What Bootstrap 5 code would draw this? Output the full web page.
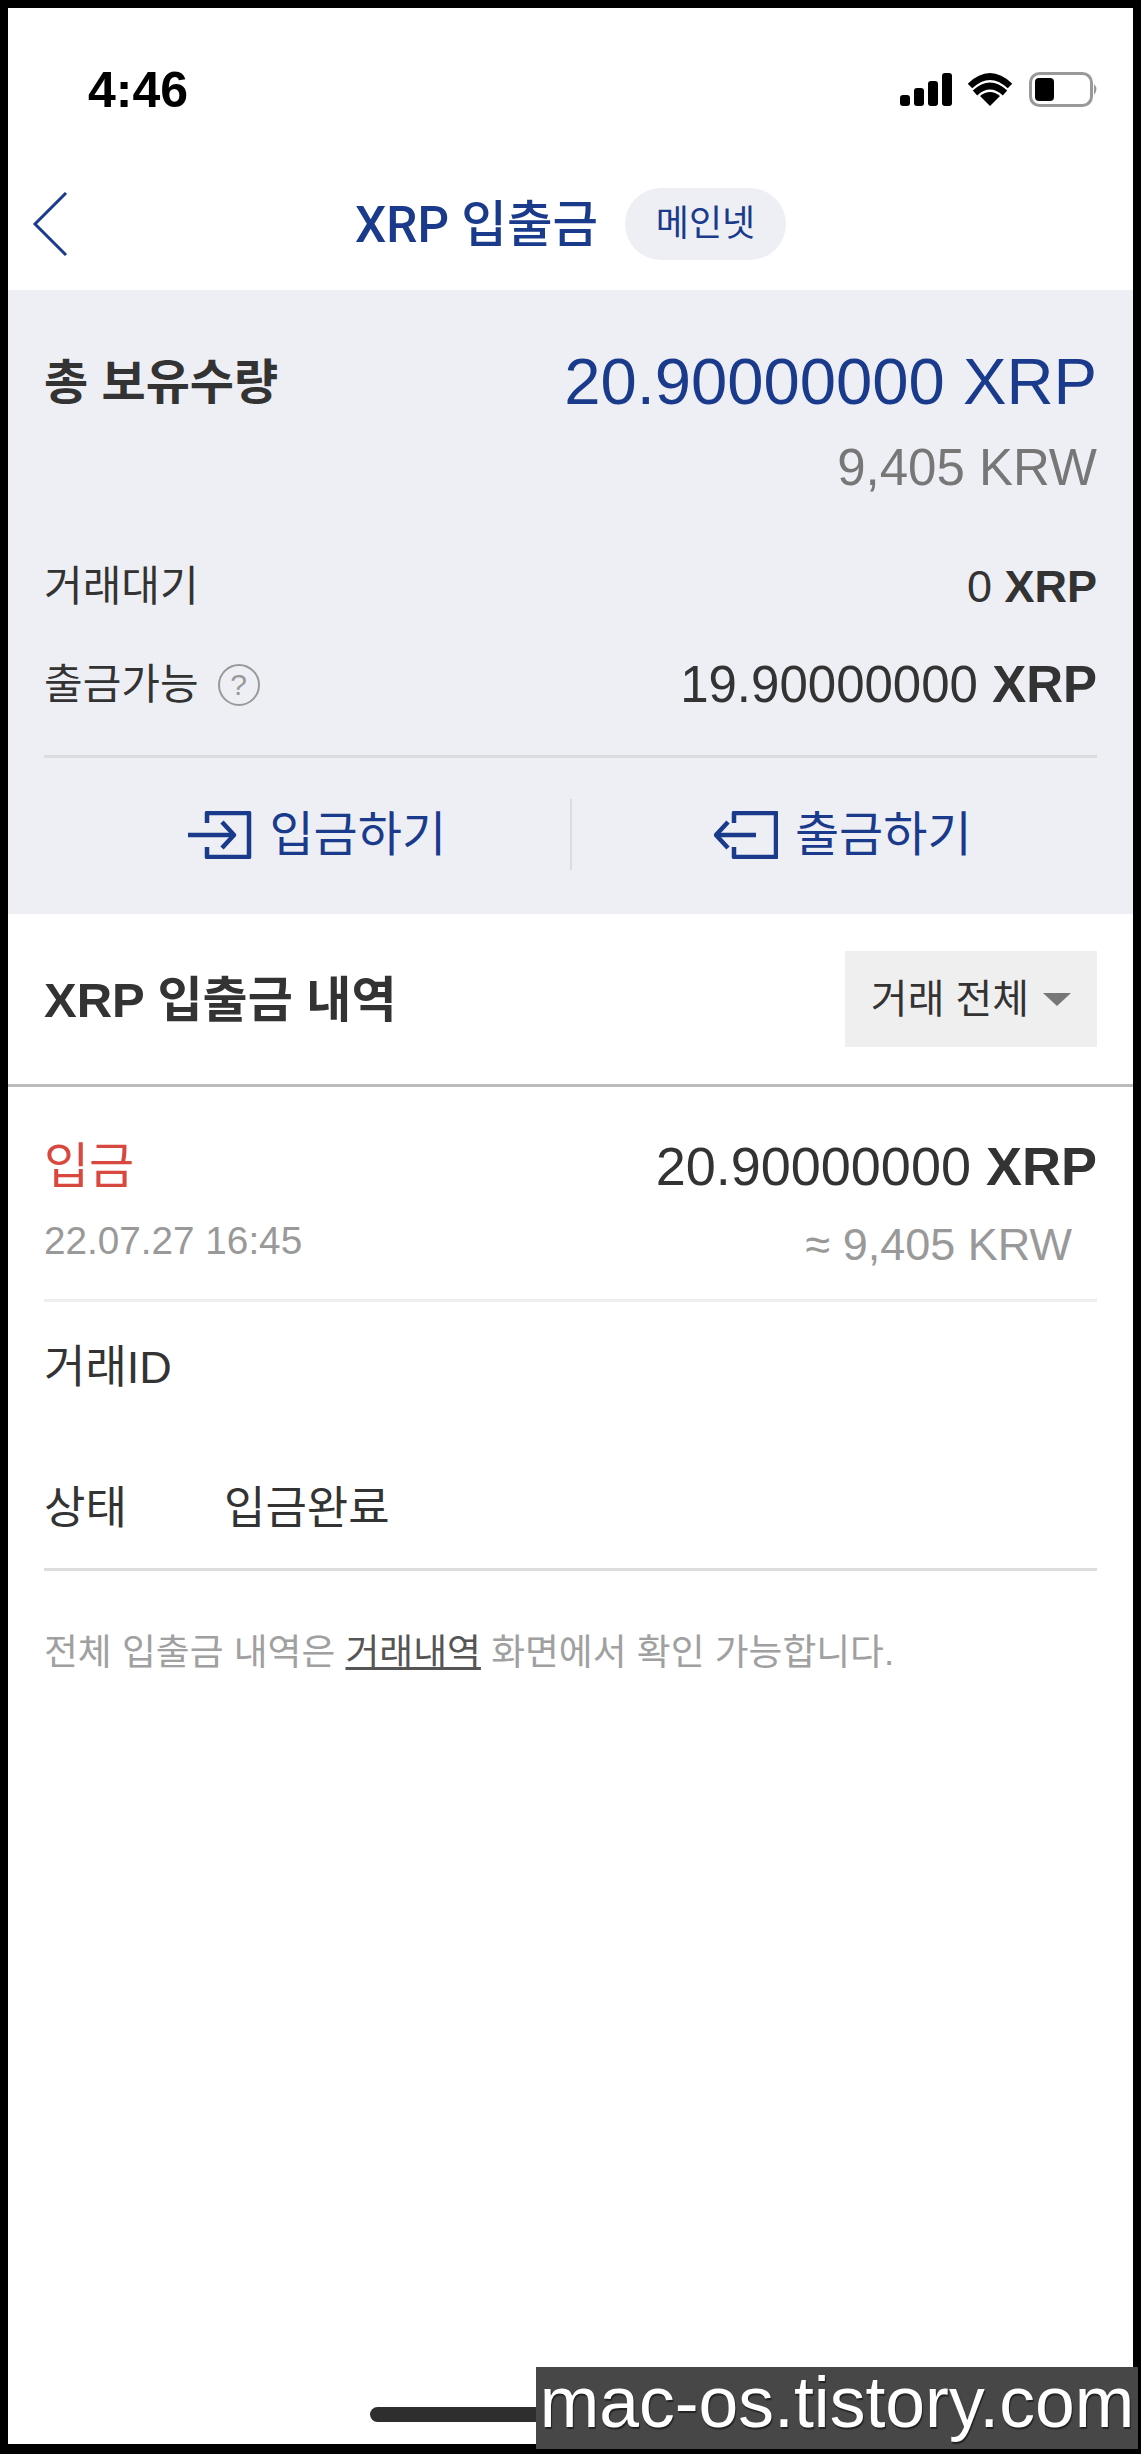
<!DOCTYPE html>
<html lang="ko">
  <head>
    <meta charset="UTF-8" />
    <meta name="viewport" content="width=device-width, initial-scale=1.0" />
    <title>XRP 입출금</title>
    <link rel="stylesheet" href="https://cdn.jsdelivr.net/npm/bootstrap@5.3.0/dist/css/bootstrap.min.css" />
    <style>
      body { background: #000; width: 1141px; height: 2454px; overflow: hidden; font-family: "Liberation Sans", "Noto Sans CJK KR", sans-serif; color: #333; }
      .phone { margin: 8px; width: 1125px; height: 2436px; background: #fff; }
      .status-bar { height: 130px; padding: 64px 33px 0 80px; }
      .status-time { font-size: 50px; line-height: 36px; font-weight: 700; color: #000; font-family: "Liberation Sans", sans-serif; }
      .top-bar { padding: 50px 0 30px; }
      .top-side { flex: 1 1 0; padding-left: 24px; }
      .top-title { font-family: Roboto, "Noto Sans CJK KR", sans-serif; font-size: 49.5px; line-height: 70px; padding-top: 2px; font-weight: 500; color: #1a3a8c; }
      .net-pill { height: 72px; width: 161px; margin-left: 27px; background: #eeeff4; font-size: 36px; color: #1a3a8c; border-radius: 36px; }
      .sum-box { background: #eeeff4; padding: 50px 36px 44px; }
      .sum-label { font-size: 48px; line-height: 80px; font-weight: 700; padding-top: 3px; }
      .sum-amount { font-size: 65.2px; line-height: 80px; color: #1a3a8c; padding-top: 2px; }
      .sum-krw { font-size: 51px; line-height: 60px; margin-top: 15px; color: #777; }
      .sum-row { line-height: 60px; font-size: 42px; }
      .sum-row-a { margin-top: 59px; }
      .sum-row-b { margin-top: 38px; }
      .val-sm { font-size: 45px; }
      .val-md { font-size: 51px; }
      .help-dot { width: 42px; height: 42px; margin-left: 19px; border: 2px solid #999; color: #999; font-size: 30px; line-height: 37px; }
      .sum-line { height: 3px; margin-top: 40px; background: #dcdce0; }
      .act-row { margin-top: 41px; height: 71px; }
      .act-btn { flex: 1 1 0; gap: 17px; font-size: 48px; color: #1a3a8c; }
      .act-in { padding-left: 21px; }
      .act-out { padding: 0 2px 0 19px; }
      .act-div { width: 2px; background: #dcdce0; }
      .hist-head { height: 173px; padding: 0 36px; border-bottom: 3px solid #bbb; }
      .hist-title { font-size: 49px; font-weight: 700; padding-top: 3px; }
      .hist-select { width: 252px; height: 96px; gap: 14px; background: #efefef; font-size: 40px; }
      .hist-caret { border-left: 14px solid transparent; border-right: 14px solid transparent; border-top: 13px solid #777; }
      .hist-body { padding: 49px 36px 0; }
      .hist-type { font-size: 49px; line-height: 60px; color: #d9483f; }
      .hist-amount { font-size: 54px; line-height: 60px; }
      .hist-sub { margin-top: 24px; line-height: 50px; }
      .hist-date { font-size: 38.7px; color: #999; margin-top: -4px; }
      .hist-krw { font-size: 45px; color: #999; padding-right: 25px; }
      .hist-line { height: 3px; background: #eee; margin-top: 29px; }
      .info-row { font-size: 45px; line-height: 60px; }
      .info-a { margin-top: 36px; }
      .info-b { margin-top: 81px; }
      .info-key { width: 180px; }
      .hist-line-end { height: 3px; background: #ddd; margin-top: 29px; }
      .hist-note { margin-top: 57px; font-size: 36.8px; line-height: 50px; color: #a0a0a0; }
      .hist-note a { color: #555; }
      .home-wrap { margin: 729px 0 0 362px; width: 400px; }
      .home-bar { height: 15px; background: #2e2e2e; border-radius: 8px; }
      .watermark { left: 536px; top: 2367px; width: 602px; height: 82px; background: #474747; color: #fff; font-size: 71.5px; line-height: 70px; text-align: center; text-shadow: 1px 2px 1px #222; }
    </style>
  </head>
  <body class="position-relative">
    <div class="phone">
      <!-- status bar -->
      <div class="status-bar d-flex justify-content-between align-items-start">
        <span class="status-time">4:46</span>
        <svg width="200" height="36" viewBox="0 0 200 36">
          <g fill="#000">
            <rect x="0" y="23" width="10" height="11" rx="3" />
            <rect x="14" y="16" width="10" height="18" rx="3" />
            <rect x="28" y="9" width="10" height="25" rx="3" />
            <rect x="42" y="1" width="10" height="33" rx="3" />
            <path d="M90 34 L80 24 Q90 16 100 24 Z" />
          </g>
          <g fill="none" stroke="#000" stroke-width="6.5">
            <path d="M70 14 Q90 -5 110 14" />
            <path d="M75 21 Q90 7 105 21" />
          </g>
          <rect x="130.5" y="1.5" width="61" height="32" rx="9" fill="none" stroke="#999" stroke-width="3" />
          <rect x="135" y="6" width="19" height="23" rx="4" fill="#000" />
          <path d="M194 12 Q199 17 194 23 Z" fill="#999" />
        </svg>
      </div>

      <!-- title -->
      <div class="top-bar d-flex align-items-center">
        <div class="top-side">
          <svg width="36" height="64" viewBox="0 0 36 64" class="d-block">
            <path d="M34 1 L3 32 L34 63" fill="none" stroke="#1a3a8c" stroke-width="3" />
          </svg>
        </div>
        <div class="top-title">XRP 입출금</div>
        <div class="net-pill d-flex align-items-center justify-content-center">메인넷</div>
        <div class="top-side"></div>
      </div>

      <!-- balance -->
      <div class="sum-box">
        <div class="d-flex justify-content-between">
          <span class="sum-label">총 보유수량</span>
          <span class="sum-amount">20.90000000 XRP</span>
        </div>
        <div class="sum-krw text-end">9,405 KRW</div>
        <div class="sum-row sum-row-a d-flex justify-content-between">
          <span>거래대기</span>
          <span class="val-sm">0 <b>XRP</b></span>
        </div>
        <div class="sum-row sum-row-b d-flex justify-content-between">
          <span class="d-flex align-items-center">출금가능<span class="help-dot rounded-circle d-inline-block text-center">?</span></span>
          <span class="val-md">19.90000000 <b>XRP</b></span>
        </div>
        <div class="sum-line"></div>
        <div class="act-row d-flex">
          <div class="act-btn act-in d-flex align-items-center justify-content-center">
            <svg width="64" height="48" viewBox="0 0 64 48">
              <g fill="none" stroke="#1a3a8c" stroke-width="4.5" stroke-linejoin="round">
                <path d="M19 12 V2 H61 V46 H19 V36" />
                <path d="M0 24 H44" />
                <path d="M34 11 L46 24 L34 37" />
              </g>
            </svg>
            <span>입금하기</span>
          </div>
          <div class="act-div"></div>
          <div class="act-btn act-out d-flex align-items-center justify-content-center">
            <svg width="64" height="48" viewBox="0 0 64 48">
              <g fill="none" stroke="#1a3a8c" stroke-width="4.5" stroke-linejoin="round">
                <path d="M20 12 V2 H62 V46 H20 V36" />
                <path d="M2 24 H42" />
                <path d="M14 11 L2 24 L14 37" />
              </g>
            </svg>
            <span>출금하기</span>
          </div>
        </div>
      </div>

      <!-- history -->
      <div class="hist-head d-flex justify-content-between align-items-center">
        <span class="hist-title">XRP 입출금 내역</span>
        <div class="hist-select d-flex align-items-center justify-content-center">
          <span>거래 전체</span>
          <span class="hist-caret"></span>
        </div>
      </div>
      <div class="hist-body">
        <div class="d-flex justify-content-between">
          <span class="hist-type">입금</span>
          <span class="hist-amount">20.90000000 <b>XRP</b></span>
        </div>
        <div class="hist-sub d-flex justify-content-between">
          <span class="hist-date">22.07.27 16:45</span>
          <span class="hist-krw">≈ 9,405 KRW</span>
        </div>
        <div class="hist-line"></div>
        <div class="info-row info-a d-flex"><span class="info-key">거래ID</span></div>
        <div class="info-row info-b d-flex"><span class="info-key">상태</span><span>입금완료</span></div>
        <div class="hist-line-end"></div>
        <div class="hist-note">전체 입출금 내역은 <a href="#">거래내역</a> 화면에서 확인 가능합니다.</div>
      </div>
      <div class="home-wrap"><div class="home-bar"></div></div>
    </div>
    <div class="watermark position-absolute">mac-os.tistory.com</div>
    <script src="https://cdn.jsdelivr.net/npm/bootstrap@5.3.0/dist/js/bootstrap.bundle.min.js"></script>
  </body>
</html>
